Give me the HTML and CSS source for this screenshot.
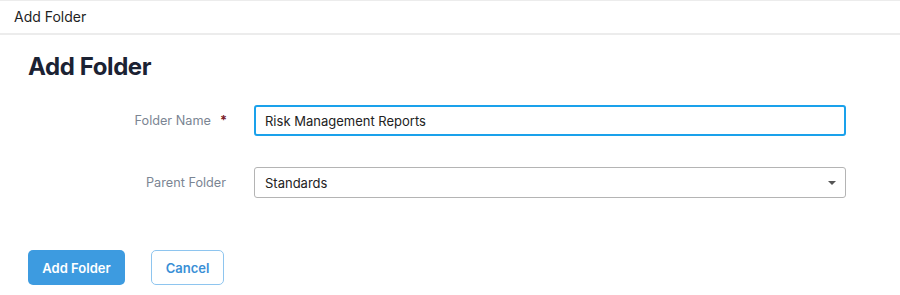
FILE: index.html
```html
<!DOCTYPE html>
<html lang="en">
<head>
    <meta charset="UTF-8">
    <meta name="viewport" content="width=device-width, initial-scale=1.0">
    <title>Add Folder</title>
    <link rel="stylesheet" href="styles.css">
</head>
<body>
    <div class="topbar">Add Folder</div>
    <div class="page">
        <h1>Add Folder</h1>
        <div class="form">
            <div class="form-row">
                <label for="folderName">Folder Name<span class="req">*</span></label>
                <input type="text" id="folderName" class="field focused" value="Risk Management Reports">
            </div>
            <div class="form-row">
                <label for="parentFolder">Parent Folder</label>
                <div class="field select">
                    <span>Standards</span>
                    <span class="caret"></span>
                </div>
            </div>
        </div>
        <div class="buttons">
            <button class="btn primary">Add Folder</button>
            <button class="btn secondary">Cancel</button>
        </div>
    </div>
</body>
</html>
```

FILE: styles.css
```css
body {
    margin: 0;
    font-family: Inter, "Noto Sans", sans-serif;
    color: #222;
    background: #fff;
}
.topbar {
    height: 35px;
    line-height: 32px;
    padding-left: 14px;
    font-size: 14px;
    color: #1f1f1f;
    border-top: 1px solid #ececec;
    border-bottom: 2px solid #ececec;
    box-sizing: border-box;
}
.page {
    padding: 0 28px;
}
h1 {
    margin: 17px 0 23px 0;
    font-size: 24px;
    line-height: 30px;
    font-weight: 700;
    color: #1b2233;
    letter-spacing: -0.4px;
}
.form {
    display: flex;
    flex-direction: column;
    gap: 31px;
}
.form-row {
    display: grid;
    grid-template-columns: 198px 592px;
    column-gap: 28px;
    align-items: center;
}
.form-row label {
    text-align: right;
    font-size: 12.7px;
    color: #7b8593;
}
.req {
    color: #7a1a2a;
    font-weight: 700;
    margin-left: 9px;
    margin-right: -1px;
}
.field {
    height: 31px;
    box-sizing: border-box;
    border: 1px solid #b4b4b4;
    border-radius: 3px;
    padding: 0 10px;
    font-family: inherit;
    font-size: 13px;
    color: #222;
    outline: none;
    width: 100%;
}
.field.focused {
    border: 2px solid #1aa1eb;
    padding: 0 9px;
}
.select {
    display: flex;
    align-items: center;
    justify-content: space-between;
}
.caret {
    width: 0;
    height: 0;
    border-left: 4px solid transparent;
    border-right: 4px solid transparent;
    border-top: 4px solid #555;
    margin-right: -1px;
}
.buttons {
    display: flex;
    gap: 26px;
    margin-top: 52px;
}
.btn {
    height: 35px;
    border-radius: 5px;
    font-family: inherit;
    font-size: 13px;
    font-weight: 600;
    cursor: pointer;
}
.primary {
    width: 97px;
    background: #3d9be0;
    border: none;
    color: #fff;
}
.secondary {
    width: 73px;
    background: #fff;
    border: 1px solid #8ec5ef;
    color: #3a8fd6;
}
```
